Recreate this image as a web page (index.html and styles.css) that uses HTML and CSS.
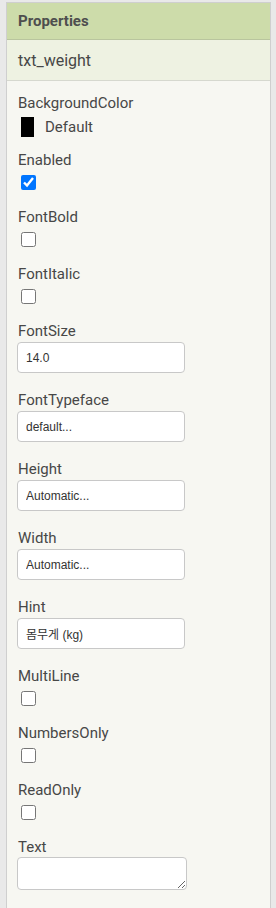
FILE: index.html
```html
<!DOCTYPE html>
<html lang="en">
<head>
  <meta charset="UTF-8" />
  <title>Properties</title>
  <link rel="stylesheet" href="styles.css">
</head>
<body>
  <div class="panel">
    <div class="panel-title">Properties</div>
    <div class="component-name">txt_weight</div>
    <div class="props">
      <div class="prop">
        <div class="prop-label">BackgroundColor</div>
        <div class="color-row">
          <span class="swatch"></span>
          <span class="color-name">Default</span>
        </div>
      </div>
      <div class="prop">
        <div class="prop-label">Enabled</div>
        <input type="checkbox" class="check" checked>
      </div>
      <div class="prop">
        <div class="prop-label">FontBold</div>
        <input type="checkbox" class="check">
      </div>
      <div class="prop">
        <div class="prop-label">FontItalic</div>
        <input type="checkbox" class="check">
      </div>
      <div class="prop">
        <div class="prop-label">FontSize</div>
        <input type="text" class="field" value="14.0">
      </div>
      <div class="prop">
        <div class="prop-label">FontTypeface</div>
        <input type="text" class="field" value="default...">
      </div>
      <div class="prop">
        <div class="prop-label">Height</div>
        <input type="text" class="field" value="Automatic...">
      </div>
      <div class="prop">
        <div class="prop-label">Width</div>
        <input type="text" class="field" value="Automatic...">
      </div>
      <div class="prop">
        <div class="prop-label">Hint</div>
        <input type="text" class="field" value="몸무게 (kg)">
      </div>
      <div class="prop">
        <div class="prop-label">MultiLine</div>
        <input type="checkbox" class="check">
      </div>
      <div class="prop">
        <div class="prop-label">NumbersOnly</div>
        <input type="checkbox" class="check">
      </div>
      <div class="prop">
        <div class="prop-label">ReadOnly</div>
        <input type="checkbox" class="check">
      </div>
      <div class="prop">
        <div class="prop-label">Text</div>
        <textarea class="area"></textarea>
      </div>
    </div>
  </div>
</body>
</html>
```

FILE: styles.css
```css
:root {
  --page-bg: #e9e9e9;
  --panel-border: #cfcfcf;
  --title-bg: #cddcaa;
  --name-bg: #eef2e2;
  --body-bg: #f7f7f2;
  --text: #474747;
  --field-border: #c8c8c8;
}

* {
  box-sizing: border-box;
}

body {
  margin: 0;
  height: 908px;
  overflow: hidden;
  background-color: var(--page-bg);
  font-family: Roboto, 'Liberation Sans', sans-serif;
  color: var(--text);
  padding: 2px 5px 0 6px;
}

.panel {
  border: 1px solid var(--panel-border);
  border-bottom: none;
  background: var(--body-bg);
  min-height: 906px;
}

.panel-title {
  background: var(--title-bg);
  height: 37px;
  line-height: 36px;
  padding-left: 11px;
  font-size: 15px;
  font-weight: bold;
  color: #4e4e4e;
  border-bottom: 1px solid #b9c59e;
}

.component-name {
  background: var(--name-bg);
  height: 41px;
  line-height: 41px;
  padding-left: 11px;
  font-size: 16px;
  border-bottom: 1px solid #d6d8cf;
}

.props {
  padding: 12px 10px 20px 10px;
}

.prop {
  padding-bottom: 14px;
}

.prop-label {
  font-size: 15px;
  line-height: 20px;
  padding-left: 1px;
}

.color-row {
  display: flex;
  align-items: center;
  margin-top: 4px;
  height: 19px;
}

.swatch {
  width: 13px;
  height: 20px;
  background: #000;
  margin-left: 4px;
}

.color-name {
  font-size: 15px;
  margin-left: 11px;
}

.check {
  display: block;
  width: 15px;
  height: 15px;
  margin: 5px 0 3px 4px;
}

.field {
  display: block;
  width: 168px;
  height: 31px;
  margin: 1px 0 3px 0;
  padding: 0 8px;
  border: 1px solid var(--field-border);
  border-radius: 4px;
  background: #fff;
  font-family: 'Liberation Sans', 'Noto Sans CJK KR', sans-serif;
  font-size: 12px;
  color: #333;
  outline: none;
}

.area {
  display: block;
  width: 170px;
  height: 33px;
  margin: 0;
  border: 1px solid var(--field-border);
  border-radius: 4px;
  background: #fff;
  font-family: 'Liberation Sans', sans-serif;
}
```
